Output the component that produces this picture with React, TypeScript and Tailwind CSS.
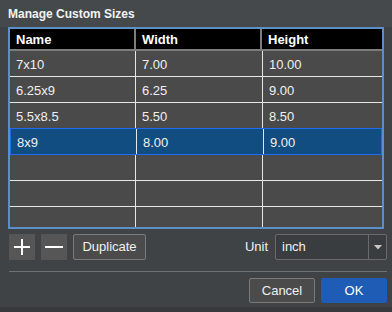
import React from 'react';

const rows = [
  { name: '7x10', width: '7.00', height: '10.00' },
  { name: '6.25x9', width: '6.25', height: '9.00' },
  { name: '5.5x8.5', width: '5.50', height: '8.50' },
  { name: '8x9', width: '8.00', height: '9.00', selected: true },
  { name: '', width: '', height: '' },
  { name: '', width: '', height: '' },
  { name: '', width: '', height: '' },
];

export default function App() {
  return (
    <div
      className="w-[392px] h-[312px] overflow-hidden bg-[#3f4346] text-white flex flex-col"
      style={{ fontFamily: '"Liberation Sans", Arial, sans-serif' }}
    >
      <div className="h-[27px] bg-[#45494c] flex items-center px-2 shrink-0">
        <span className="text-[12px] font-bold text-[#f2f2f2]">Manage Custom Sizes</span>
      </div>

      <div className="mx-2 h-[202px] border-2 border-[#5b8fc7] bg-[#4a4a4a] flex flex-col overflow-hidden shrink-0">
        <div className="h-[22px] bg-black border-b-2 border-[#7d7d7d] grid grid-cols-[126px_126px_1fr] shrink-0">
          <div className="border-r-2 border-[#7d7d7d] pl-[6px] pt-px flex items-center text-[13px] font-bold">Name</div>
          <div className="border-r-2 border-[#7d7d7d] pl-[6px] pt-px flex items-center text-[13px] font-bold">Width</div>
          <div className="pl-[6px] pt-px flex items-center text-[13px] font-bold">Height</div>
        </div>
        <div className="flex-1 overflow-hidden">
          {rows.map((r, i) => (
            <div
              key={i}
              className={
                r.selected
                  ? 'h-[27px] grid grid-cols-[126px_127px_1fr] bg-[#124d82] border border-[#1f6cf0] -mt-px'
                  : 'h-[26px] grid grid-cols-[126px_127px_1fr] border-b border-[#e6e6e6]'
              }
            >
              <div className="border-r border-[#e6e6e6] pl-[6px] pt-[2px] flex items-center text-[13px] text-[#f0f0f0]">{r.name}</div>
              <div className="border-r border-[#e6e6e6] pl-[6px] pt-[2px] flex items-center text-[13px] text-[#f0f0f0]">{r.width}</div>
              <div className="pl-[6px] pt-[2px] flex items-center text-[13px] text-[#f0f0f0]">{r.height}</div>
            </div>
          ))}
        </div>
      </div>

      <div className="mt-[5px] h-[26px] flex items-center pl-[9px] pr-[5px] shrink-0">
        <button className="w-[26px] h-[26px] bg-[#565656] flex items-center justify-center">
          <svg width="18" height="18" viewBox="0 0 18 18">
            <path d="M9 1v16M1 9h16" stroke="#ffffff" strokeWidth="2" />
          </svg>
        </button>
        <button className="ml-[6px] w-[26px] h-[26px] bg-[#565656] flex items-center justify-center">
          <svg width="20" height="18" viewBox="0 0 20 18">
            <path d="M1 9h18" stroke="#ffffff" strokeWidth="2" />
          </svg>
        </button>
        <button className="ml-[6px] w-[73px] h-[26px] bg-[#4b4b4b] border border-[#7a7a7a] rounded-[2px] text-[13px] text-[#f0f0f0]">
          Duplicate
        </button>
        <div className="flex-1" />
        <span className="text-[13px] text-[#f0f0f0] mr-[7px]">Unit</span>
        <div className="w-[112px] h-[26px] bg-[#3a3d40] border border-[#6a6a6a] rounded-[2px] flex items-center">
          <span className="flex-1 pl-[6px] text-[13px] text-[#f0f0f0]">inch</span>
          <div className="w-[18px] h-full border-l border-[#6a6a6a] flex items-center justify-center">
            <svg width="8" height="5" viewBox="0 0 8 5">
              <path d="M0 0h8L4 4.5z" fill="#c8c8c8" />
            </svg>
          </div>
        </div>
      </div>

      <div className="mt-[11px] mx-[9px] mr-[5px] h-px bg-[#6f7275] shrink-0" />

      <div className="mt-[6px] flex justify-end gap-[6px] pr-[5px] shrink-0">
        <button className="w-[66px] h-[25px] bg-[#4b4b4b] border border-[#7a7a7a] rounded-[2px] text-[13px] text-[#f0f0f0]">
          Cancel
        </button>
        <button className="w-[66px] h-[25px] bg-[#1f5cb5] rounded-[2px] text-[13px] text-white">
          OK
        </button>
      </div>
      <div className="flex-1 mt-[4px] bg-[#37393c]" />
    </div>
  );
}
